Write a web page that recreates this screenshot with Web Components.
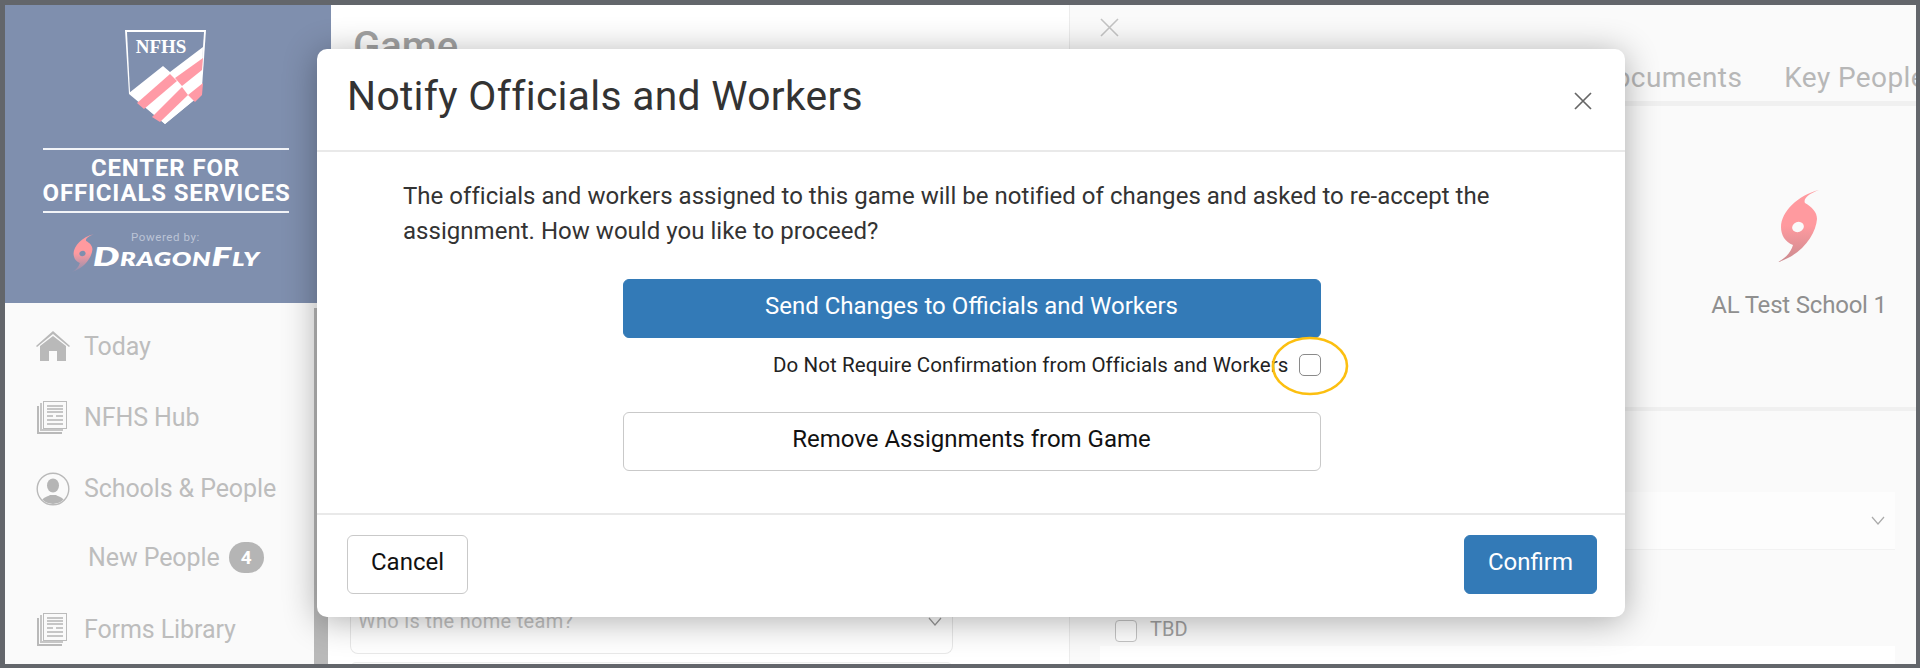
<!DOCTYPE html>
<html>
<head>
<meta charset="utf-8">
<title>Notify Officials and Workers</title>
<style>
  html, body { margin: 0; height: 100%; background: #63666b; }
  body { font-family: Roboto, "Liberation Sans", sans-serif; overflow: hidden; }
</style>
</head>
<body>
<app-frame>
  <side-nav slot="side">
    <nav-item icon="home">Today</nav-item>
    <nav-item icon="doc">NFHS Hub</nav-item>
    <nav-item icon="person">Schools &amp; People</nav-item>
    <nav-item sub badge="4">New People</nav-item>
    <nav-item icon="doc">Forms Library</nav-item>
  </side-nav>
  <game-panel slot="main"></game-panel>
  <detail-panel slot="detail"></detail-panel>
  <modal-dialog slot="modal" heading="Notify Officials and Workers">
    <p>The officials and workers assigned to this game will be notified of changes and asked to re-accept the assignment. How would you like to proceed?</p>
    <ui-button primary wide>Send Changes to Officials and Workers</ui-button>
    <confirm-toggle>Do Not Require Confirmation from Officials and Workers</confirm-toggle>
    <ui-button wide>Remove Assignments from Game</ui-button>
    <ui-button slot="left">Cancel</ui-button>
    <ui-button slot="right" primary>Confirm</ui-button>
  </modal-dialog>
</app-frame>

<script>
const STORM_PATH = 'M41 0C30 4 25 9 27 13C34 17 39 22 39 29C38 44 24 65 0 72C8 68 13 62 15 55C7 52 3 45 3 37C3 22 20 5 41 0Z';

class StormMark extends HTMLElement {
  constructor() {
    super();
    this.attachShadow({ mode: 'open' });
    const hole = this.getAttribute('hole') || '#fafafa';
    const low = this.getAttribute('low') || '#cb8a8f';
    this.shadowRoot.innerHTML = `
      <style>
        :host { display: block; line-height: 0; }
        svg { width: 100%; height: 100%; }
      </style>
      <svg viewBox="0 0 42 72">
        <defs>
          <linearGradient id="g" x1="0" y1="0" x2="0" y2="1">
            <stop offset=".5" stop-color="#ff9a9f"/>
            <stop offset="1" stop-color="${low}"/>
          </linearGradient>
        </defs>
        <path fill="url(#g)" d="${STORM_PATH}"/>
        <ellipse cx="20" cy="37" rx="6" ry="5" transform="rotate(-20 20 37)" fill="${hole}"/>
      </svg>
    `;
  }
}

class AppFrame extends HTMLElement {
  constructor() {
    super();
    this.attachShadow({ mode: 'open' });
    this.shadowRoot.innerHTML = `
      <style>
        :host {
          display: block;
          position: relative;
          box-sizing: border-box;
          width: 1920px;
          height: 668px;
          padding: 5px 4px 4px 5px;
        }
        main {
          display: flex;
          height: 100%;
          overflow: hidden;
          background: #fafafa;
        }
      </style>
      <main>
        <slot name="side"></slot>
        <slot name="main"></slot>
        <slot name="detail"></slot>
      </main>
      <slot name="modal"></slot>
    `;
  }
}

class SideNav extends HTMLElement {
  constructor() {
    super();
    this.attachShadow({ mode: 'open' });
    this.shadowRoot.innerHTML = `
      <style>
        :host {
          display: flex;
          flex-direction: column;
          flex: 0 0 323px;
          position: relative;
          z-index: 1;
          background: #fafafa;
        }
        header {
          flex: 0 0 298px;
          box-sizing: border-box;
          margin-right: -3px;
          background: #7f8fae;
          display: flex;
          flex-direction: column;
          align-items: center;
          padding: 25px 5px 0 0;
          color: #fff;
        }
        header > svg { flex: none; }
        .title {
          box-sizing: border-box;
          width: 246px;
          margin-top: 22px;
          border-top: 2px solid #f2f4f8;
          border-bottom: 2px solid #f2f4f8;
          padding: 5.5px 0;
          font: 700 24px/25px Roboto, sans-serif;
          letter-spacing: .85px;
          text-align: center;
          white-space: nowrap;
        }
        .powered {
          margin-top: 16px;
          font-size: 11.5px;
          line-height: 16px;
          letter-spacing: .6px;
          color: #bcc4d6;
        }
        .brand {
          display: flex;
          align-items: center;
          margin-top: -11px;
        }
        storm-mark { width: 22px; height: 38px; }
        .name {
          width: 167px;
          font: italic 800 26px/20px Lato, sans-serif;
          font-variant: small-caps;
          letter-spacing: .5px;
          margin-top: 5px;
          margin-left: -1px;
          transform: scaleX(1.43);
          transform-origin: left center;
          white-space: nowrap;
        }
        .lower {
          flex: 1;
          display: flex;
          min-height: 0;
        }
        nav {
          flex: 1;
          display: flex;
          flex-direction: column;
          padding-top: 8px;
        }
        .bar {
          flex: 0 0 14px;
          margin-top: 5px;
          background: #b9b9b9;
        }
      </style>
      <header>
        <svg width="82" height="96" viewBox="0 0 82 96">
          <path d="M0 0H81L76.5 64L40 94L4 64Z" fill="#fff"/>
          <path d="M2 2H79L75 62L40 92L5 62Z" fill="#7f8fae"/>
          <path d="M4 63L38 36L45 42L78 17L76.5 64L40 94Z" fill="#fff"/>
          <path d="M12 73L45 44L52 51L19 79Z" fill="#ff9aa6"/>
          <path d="M27 87L57 57L63 65L35 92Z" fill="#ff9aa6"/>
          <path d="M50 48L78 28L77 40L57 56Z" fill="#ff9aa6"/>
          <path d="M63 65L78 53L77 65L70 72Z" fill="#ff9aa6"/>
          <text x="36" y="23" text-anchor="middle" fill="#fff" font-family="'Liberation Serif', serif" font-weight="700" font-size="19">NFHS</text>
        </svg>
        <div class="title">CENTER FOR<br>OFFICIALS SERVICES</div>
        <div class="powered">Powered by:</div>
        <div class="brand">
          <storm-mark hole="#7f8fae" low="#8f8fae"></storm-mark>
          <div class="name">DragonFly</div>
        </div>
      </header>
      <div class="lower">
        <nav><slot></slot></nav>
        <div class="bar"></div>
      </div>
    `;
  }
}

const NAV_ICONS = {
  home: `<svg width="34" height="31" viewBox="0 0 34 31" fill="#b9b9b9">
      <path d="M17 0L34 15L33 16L17 3L1 16L0 15Z"/>
      <path d="M4 15L17 5L30 15V30H21V20H13V30H4Z"/></svg>`,
  doc: `<svg width="32" height="34" viewBox="0 0 32 34">
      <path d="M1 5H3V31H26V33H1Z" fill="#b9b9b9"/>
      <path d="M4 2H6V28H27V30H4Z" fill="#c6c6c6"/>
      <rect x="7.5" y=".5" width="23" height="27" fill="#fafafa" stroke="#bbb"/>
      <path d="M11 5H27M11 8H27M11 11H27M11 15H17M20 15H27M11 19H27M11 23H27" stroke="#b5b5b5" stroke-width="1.4"/></svg>`,
  person: `<svg width="34" height="34" viewBox="0 0 34 34">
      <clipPath id="c"><circle cx="17" cy="17" r="15"/></clipPath>
      <circle cx="17" cy="17" r="15.8" fill="none" stroke="#b9b9b9" stroke-width="1.4"/>
      <g clip-path="url(#c)" fill="#b5b5b5">
        <ellipse cx="17" cy="13.5" rx="6" ry="7"/>
        <path d="M3 34C4 26 11 25 14 23H20C23 25 30 26 31 34Z"/>
      </g></svg>`,
};

class NavItem extends HTMLElement {
  constructor() {
    super();
    this.attachShadow({ mode: 'open' });
    const icon = NAV_ICONS[this.getAttribute('icon')] || '';
    const badge = this.getAttribute('badge');
    this.shadowRoot.innerHTML = `
      <style>
        :host {
          display: flex;
          align-items: center;
          box-sizing: border-box;
          flex: 0 0 71px;
          padding-left: 31px;
          font-size: 25px;
          letter-spacing: -.1px;
          color: #bdbdbd;
          white-space: nowrap;
        }
        :host([sub]) { padding: 0 0 3px 83px; flex-basis: 70px; }
        .icon { flex: 0 0 48px; display: flex; align-items: center; }
        .badge {
          margin-left: 9px;
          width: 35px;
          height: 31px;
          border-radius: 16px;
          background: #b5b5b5;
          color: #fff;
          font-size: 19px;
          font-weight: 700;
          line-height: 31px;
          text-align: center;
        }
      </style>
      ${icon ? `<span class="icon">${icon}</span>` : ''}
      <slot></slot>
      ${badge ? `<span class="badge">${badge}</span>` : ''}
    `;
  }
}

class GamePanel extends HTMLElement {
  constructor() {
    super();
    this.attachShadow({ mode: 'open' });
    this.shadowRoot.innerHTML = `
      <style>
        :host {
          display: flex;
          flex-direction: column;
          flex: 0 0 742px;
          box-sizing: border-box;
          padding: 18px 116px 0 22px;
          background: #fff;
          border-right: 1px solid #ececec;
          overflow: hidden;
        }
        h1 {
          margin: 0 0 0 3px;
          font-size: 40px;
          font-weight: 500;
          line-height: 48px;
          color: #a2a2a2;
        }
        .field {
          box-sizing: border-box;
          display: flex;
          align-items: center;
          justify-content: space-between;
          margin-top: 535px;
          flex: 0 0 48px;
          padding: 0 10px 17px 7px;
          border: 1px solid #e8e8e8;
          border-top: 0;
          border-radius: 0 0 8px 8px;
          font-size: 20px;
          letter-spacing: .3px;
          color: #c4c4c4;
          white-space: nowrap;
        }
        svg { display: block; }
        .tail {
          flex: none;
          height: 10px;
          margin-top: 8px;
          background: #fafafa;
          border-radius: 6px;
          border: 1px solid #eee;
        }
      </style>
      <h1>Game</h1>
      <div class="field">Who is the home team?
        <svg width="14" height="9" viewBox="0 0 14 9"><path d="M1 1L7 8L13 1" fill="none" stroke="#999" stroke-width="1.2"/></svg>
      </div>
      <div class="tail"></div>
    `;
  }
}

class DetailPanel extends HTMLElement {
  constructor() {
    super();
    this.attachShadow({ mode: 'open' });
    this.shadowRoot.innerHTML = `
      <style>
        :host {
          display: flex;
          flex-direction: column;
          flex: 1;
          min-width: 0;
          background: #fafafa;
          overflow: hidden;
        }
        .close { padding: 13px 0 0 30px; height: 25px; flex: none; }
        .tabs {
          flex: none;
          display: flex;
          justify-content: flex-end;
          gap: 42px;
          height: 63px;
          box-sizing: border-box;
          padding-top: 18px;
          margin-right: -10px;
          border-bottom: 5px solid #f0f0f0;
          font-size: 28px;
          letter-spacing: .4px;
          color: #b7b7b7;
          white-space: nowrap;
        }
        .school {
          flex: 0 0 305px;
          box-sizing: border-box;
          border-bottom: 4px solid #f0f0f0;
          display: flex;
          flex-direction: column;
          align-items: center;
          padding: 84px 0 0 612px;
          white-space: nowrap;
        }
        storm-mark { width: 42px; height: 72px; flex: none; }
        .school span {
          margin-top: 29px;
          font-size: 24px;
          letter-spacing: -.2px;
          color: #8f8f8f;
        }
        .select {
          margin: 81px 21px 0 30px;
          flex: 0 0 58px;
          box-sizing: border-box;
          background: #fdfdfd;
          border-bottom: 1px solid #f2f2f2;
          display: flex;
          align-items: center;
          justify-content: flex-end;
          padding-right: 10px;
        }
        .tbd {
          flex: none;
          display: flex;
          align-items: flex-start;
          gap: 13px;
          margin: 70px 0 0 45px;
          font-size: 20px;
          line-height: 18px;
          color: #a0a0a0;
        }
        .tbd i {
          box-sizing: border-box;
          width: 22px;
          height: 22px;
          border: 1px solid #c4c4c4;
          border-radius: 4px;
          background: #fff;
        }
        .rest { flex: 1; margin: 4px 21px 0 30px; background: #fff; }
      </style>
      <div class="close">
        <svg width="19" height="19" viewBox="0 0 19 19"><path d="M1 1L18 18M18 1L1 18" stroke="#c4c4c4" stroke-width="1.6"/></svg>
      </div>
      <div class="tabs"><span>Documents</span><span>Key People</span></div>
      <div class="school"><storm-mark></storm-mark><span>AL Test School 1</span></div>
      <div class="select">
        <svg width="14" height="9" viewBox="0 0 14 9"><path d="M1 1L7 8L13 1" fill="none" stroke="#aaa" stroke-width="1.2"/></svg>
      </div>
      <div class="tbd"><i></i>TBD</div>
      <div class="rest"></div>
    `;
  }
}

class ModalDialog extends HTMLElement {
  constructor() {
    super();
    this.attachShadow({ mode: 'open' });
    this.shadowRoot.innerHTML = `
      <style>
        :host {
          position: absolute;
          left: 317px;
          top: 49px;
          z-index: 2;
          width: 1308px;
          height: 568px;
          display: flex;
          flex-direction: column;
          box-sizing: border-box;
          background: #fff;
          border-radius: 10px;
          box-shadow: 0 4px 34px rgba(0,0,0,.32);
          color: #222;
        }
        header {
          flex: 0 0 103px;
          box-sizing: border-box;
          display: flex;
          align-items: flex-start;
          justify-content: space-between;
          padding: 22px 33px 0 30px;
          border-bottom: 2px solid #e9e9e9;
        }
        h2 {
          margin: 0;
          font-size: 40.8px;
          font-weight: 400;
          line-height: 50px;
          letter-spacing: .3px;
          color: #333;
        }
        header svg { margin-top: 21px; }
        section {
          flex: 1;
          display: flex;
          flex-direction: column;
          align-items: center;
          padding: 27px 0 0;
          border-bottom: 2px solid #e9e9e9;
        }
        ::slotted(p) {
          align-self: flex-start;
          width: 1110px;
          margin: 0 0 30px 86px;
          font-size: 24px;
          line-height: 35px;
          letter-spacing: .03px;
          color: #333;
        }
        footer {
          flex: 0 0 102px;
          box-sizing: border-box;
          display: flex;
          justify-content: space-between;
          padding: 20px 28px 0 30px;
        }
      </style>
      <header>
        <h2>${this.getAttribute('heading')}</h2>
        <svg width="18" height="18" viewBox="0 0 18 18"><path d="M1 1L17 17M17 1L1 17" stroke="#666" stroke-width="1.7"/></svg>
      </header>
      <section><slot></slot></section>
      <footer><slot name="left"></slot><slot name="right"></slot></footer>
    `;
  }
}

class UiButton extends HTMLElement {
  constructor() {
    super();
    this.attachShadow({ mode: 'open' });
    this.shadowRoot.innerHTML = `
      <style>
        :host {
          display: flex;
          flex: none;
          align-items: center;
          justify-content: center;
          box-sizing: border-box;
          height: 59px;
          padding: 0 23px 5px;
          background: #fff;
          border: 1px solid #c9c9c9;
          border-radius: 6px;
          font-size: 24px;
          color: #111;
          white-space: nowrap;
        }
        :host([primary]) {
          background: #337ab7;
          border-color: #337ab7;
          color: #fff;
        }
        :host([wide]) { width: 698px; margin-left: 1px; }
      </style>
      <slot></slot>
    `;
  }
}

class ConfirmToggle extends HTMLElement {
  constructor() {
    super();
    this.attachShadow({ mode: 'open' });
    this.shadowRoot.innerHTML = `
      <style>
        :host {
          position: relative;
          display: flex;
          flex: none;
          align-self: flex-start;
          box-sizing: border-box;
          align-items: center;
          gap: 11px;
          height: 74px;
          padding-bottom: 20px;
          margin-left: 456px;
          font-size: 20.5px;
          letter-spacing: .09px;
          color: #222;
          white-space: nowrap;
        }
        i {
          box-sizing: border-box;
          flex: 0 0 22px;
          height: 22px;
          border: 1.5px solid #8a8a8a;
          border-radius: 5px;
        }
        svg {
          position: absolute;
          right: -27px;
          top: -1px;
          overflow: visible;
        }
      </style>
      <slot></slot><i></i>
      <svg width="76" height="58" viewBox="0 0 76 58"><ellipse cx="38" cy="29" rx="37" ry="28" fill="none" stroke="#fcbf10" stroke-width="2.6"/></svg>
    `;
  }
}

customElements.define('storm-mark', StormMark);
customElements.define('app-frame', AppFrame);
customElements.define('side-nav', SideNav);
customElements.define('nav-item', NavItem);
customElements.define('game-panel', GamePanel);
customElements.define('detail-panel', DetailPanel);
customElements.define('modal-dialog', ModalDialog);
customElements.define('ui-button', UiButton);
customElements.define('confirm-toggle', ConfirmToggle);
</script>
</body>
</html>
